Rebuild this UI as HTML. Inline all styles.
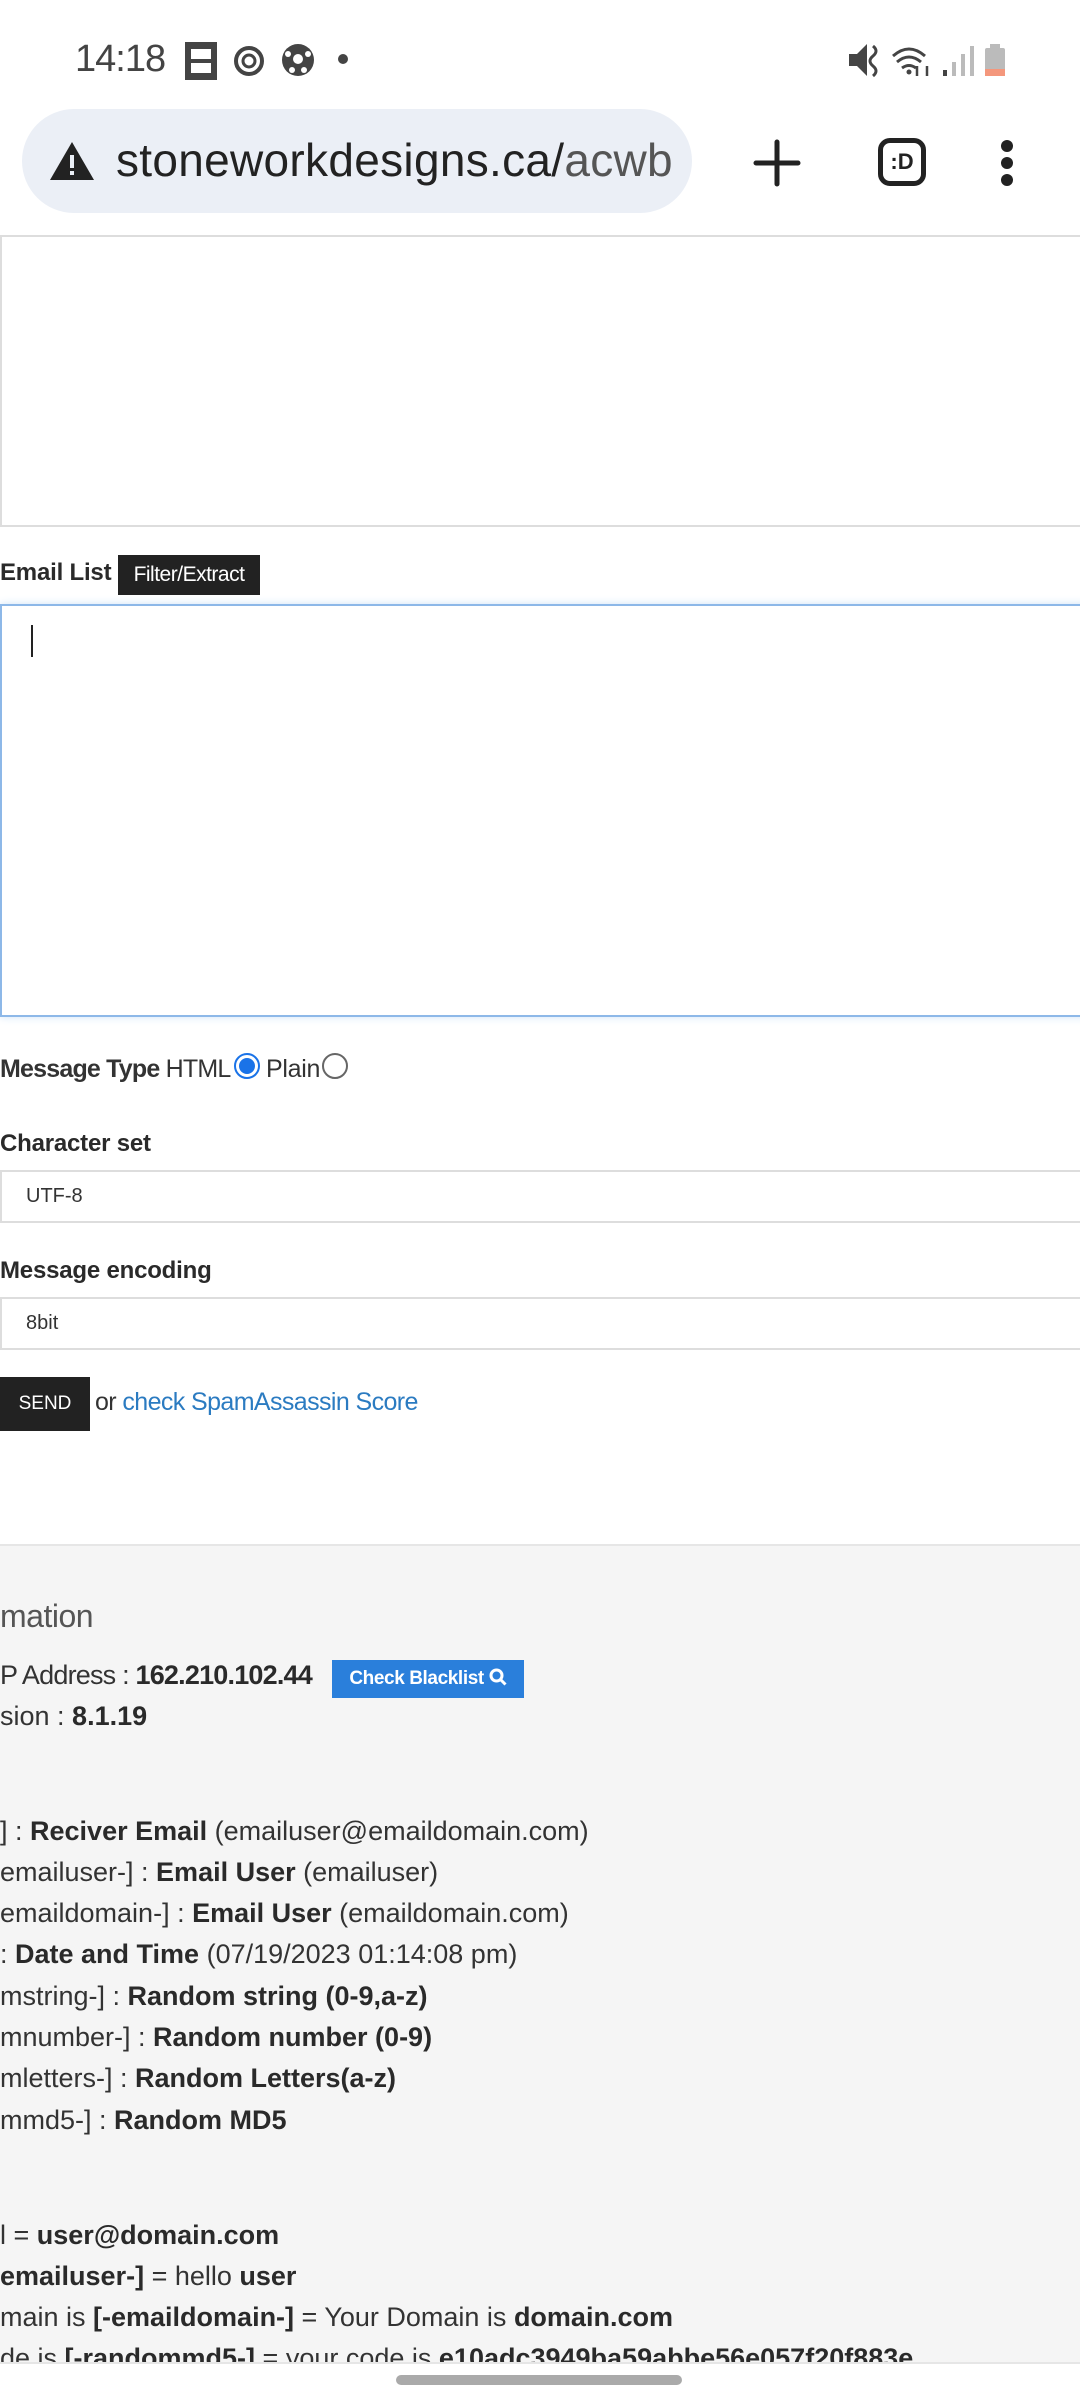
<!DOCTYPE html>
<html><head><meta charset="utf-8"><style>
*{margin:0;padding:0;box-sizing:border-box}
body{width:1080px;height:2400px;position:relative;overflow:hidden;background:#fff;font-family:"Liberation Sans",sans-serif;color:#222}
.a{position:absolute;white-space:nowrap}
.t{font-size:27px;letter-spacing:0px;color:#333}
.t b{color:#2a2a2a}
.lab{font-size:24px;font-weight:bold;letter-spacing:-0.2px;color:#2a2a2a}
</style></head><body>
<!-- status bar -->
<div class="a" style="left:75px;top:38px;font-size:38px;color:#444;letter-spacing:-1px">14:18</div>
<svg class="a" style="left:183px;top:40px" width="40" height="42"><rect x="2" y="2" width="32" height="38" fill="#444"/><rect x="8" y="9" width="20" height="10" fill="#fff"/><rect x="8" y="23" width="20" height="10" fill="#fff"/><rect x="8" y="19" width="20" height="4" fill="#444"/></svg>
<svg class="a" style="left:232px;top:44px" width="34" height="34"><circle cx="17" cy="17" r="13" fill="none" stroke="#444" stroke-width="4"/><circle cx="17" cy="17" r="6" fill="none" stroke="#444" stroke-width="3"/></svg>
<svg class="a" style="left:280px;top:42px" width="36" height="36"><circle cx="18" cy="18" r="16" fill="#444"/><circle cx="18" cy="17" r="5" fill="#fff"/><circle cx="8" cy="12" r="3" fill="#fff"/><circle cx="28" cy="12" r="3" fill="#fff"/><circle cx="12" cy="28" r="3" fill="#fff"/><circle cx="24" cy="28" r="3" fill="#fff"/></svg>
<div class="a" style="left:338px;top:54px;width:10px;height:10px;border-radius:5px;background:#444"></div>
<svg class="a" style="left:845px;top:42px" width="170" height="36"><path d="M4 12h8l10-10v32l-10-10h-8z" fill="#444"/><path d="M28 4q6 5 0 10t0 10t0 10" fill="none" stroke="#444" stroke-width="3"/><path d="M48 14q16-14 32 0M52 20q12-10 24 0M57 26q7-5 14 0" fill="none" stroke="#444" stroke-width="3"/><circle cx="64" cy="30" r="2.5" fill="#444"/><path d="M72 24v10M82 34v-10" stroke="#444" stroke-width="2.5"/><rect x="98" y="28" width="4" height="6" fill="#444"/><rect x="107" y="20" width="4" height="14" fill="#bbb"/><rect x="116" y="12" width="4" height="22" fill="#bbb"/><rect x="125" y="4" width="4" height="30" fill="#bbb"/><rect x="140" y="6" width="20" height="28" rx="2" fill="#bbb"/><rect x="145" y="2" width="10" height="5" fill="#bbb"/><rect x="140" y="27" width="20" height="7" fill="#f4977c"/></svg>
<!-- url bar -->
<div class="a" style="left:22px;top:109px;width:670px;height:104px;border-radius:52px;background:#ebeff6"></div>
<svg class="a" style="left:48px;top:140px" width="48" height="42"><path d="M24 2L46 40H2z" fill="#222"/><rect x="22" y="15" width="4" height="13" fill="#ebeff6"/><rect x="22" y="31" width="4" height="4" fill="#ebeff6"/></svg>
<div class="a" style="left:116px;top:133px;width:556px;overflow:hidden;font-size:46px;color:#222;letter-spacing:0.3px">stonework<span>designs.ca/</span><span style="color:#555">acwb</span></div>
<svg class="a" style="left:752px;top:138px" width="50" height="50"><path d="M25 4v42M4 25h42" stroke="#222" stroke-width="5" stroke-linecap="round"/></svg>
<div class="a" style="left:878px;top:138px;width:48px;height:48px;border:5px solid #222;border-radius:12px;font-size:22px;font-weight:bold;text-align:center;line-height:38px">:D</div>
<svg class="a" style="left:995px;top:138px" width="24" height="50"><circle cx="12" cy="8" r="6" fill="#222"/><circle cx="12" cy="25" r="6" fill="#222"/><circle cx="12" cy="42" r="6" fill="#222"/></svg>
<!-- top textarea -->
<div class="a" style="left:0;top:235px;width:1090px;height:292px;border:2px solid #ddd"></div>
<!-- email list -->
<div class="a lab" style="left:0;top:559px">Email List</div>
<div class="a" style="left:118px;top:555px;width:142px;height:40px;background:#222;color:#fff;font-size:21px;line-height:40px;text-align:center;letter-spacing:-0.5px">Filter/Extract</div>
<div class="a" style="left:0;top:604px;width:1090px;height:413px;border:2px solid #8db8e8;box-shadow:0 0 8px #cfe3f7"></div>
<div class="a" style="left:31px;top:625px;width:2px;height:32px;background:#222"></div>
<!-- message type -->
<div class="a" style="left:0;top:1055px;font-size:25px;color:#333;letter-spacing:-0.8px"><b>Message Type</b> HTML</div>
<div class="a" style="left:234px;top:1053px;width:26px;height:26px;border-radius:13px;border:2px solid #1a73e8;background:#fff"><div style="margin:3px;width:16px;height:16px;border-radius:8px;background:#1a73e8"></div></div>
<div class="a" style="left:266px;top:1055px;font-size:25px;color:#333;letter-spacing:-0.3px">Plain</div>
<div class="a" style="left:322px;top:1053px;width:26px;height:26px;border-radius:13px;border:2px solid #666"></div>
<div class="a lab" style="left:0;top:1130px">Character set</div>
<div class="a" style="left:0;top:1170px;width:1090px;height:53px;border:2px solid #ddd;font-size:20px;line-height:49px;padding-left:24px;color:#333">UTF-8</div>
<div class="a lab" style="left:0;top:1257px">Message encoding</div>
<div class="a" style="left:0;top:1297px;width:1090px;height:53px;border:2px solid #ddd;font-size:20px;line-height:49px;padding-left:24px;color:#333">8bit</div>
<div class="a" style="left:0;top:1377px;width:90px;height:54px;background:#222;color:#fff;font-size:19px;line-height:54px;text-align:center">SEND</div>
<div class="a" style="left:95px;top:1388px;font-size:25px;color:#333;letter-spacing:-0.6px">or <span style="color:#2b7bc1">check SpamAssassin Score</span></div>
<!-- grey section -->
<div class="a" style="left:0;top:1544px;width:1080px;height:820px;background:#f5f5f5;border-top:2px solid #e6e6e6"></div>
<div class="a" style="left:0;top:1598px;font-size:32px;color:#555;letter-spacing:-0.5px">mation</div>
<div class="a t" style="left:0;top:1660px;letter-spacing:-0.8px">P Address : <b>162.210.102.44</b></div>
<div class="a" style="left:332px;top:1660px;width:192px;height:38px;background:#2a7fdb;color:#fff;font-size:19px;font-weight:bold;line-height:38px;text-align:center;letter-spacing:-0.4px">Check Blacklist <svg width="18" height="18" style="vertical-align:-2px"><circle cx="7.5" cy="7.5" r="5.5" fill="none" stroke="#fff" stroke-width="3"/><path d="M11.5 11.5L16.5 16.5" stroke="#fff" stroke-width="3"/></svg></div>
<div class="a t" style="left:0;top:1701px">sion : <b>8.1.19</b></div>
<div class="a t" style="left:0;top:1816px">] : <b>Reciver Email</b> (emailuser@emaildomain.com)</div>
<div class="a t" style="left:0;top:1857px">emailuser-] : <b>Email User</b> (emailuser)</div>
<div class="a t" style="left:0;top:1898px">emaildomain-] : <b>Email User</b> (emaildomain.com)</div>
<div class="a t" style="left:0;top:1939px">: <b>Date and Time</b> (07/19/2023 01:14:08 pm)</div>
<div class="a t" style="left:0;top:1981px">mstring-] : <b>Random string (0-9,a-z)</b></div>
<div class="a t" style="left:0;top:2022px">mnumber-] : <b>Random number (0-9)</b></div>
<div class="a t" style="left:0;top:2063px">mletters-] : <b>Random Letters(a-z)</b></div>
<div class="a t" style="left:0;top:2105px">mmd5-] : <b>Random MD5</b></div>
<div class="a t" style="left:0;top:2220px">l = <b>user@domain.com</b></div>
<div class="a t" style="left:0;top:2261px"><b>emailuser-]</b> = hello <b>user</b></div>
<div class="a t" style="left:0;top:2302px">main is <b>[-emaildomain-]</b> = Your Domain is <b>domain.com</b></div>
<div class="a t" style="left:0;top:2343px">de is <b>[-randommd5-]</b> = your code is <b>e10adc3949ba59abbe56e057f20f883e</b></div>
<!-- nav bar -->
<div class="a" style="left:0;top:2362px;width:1080px;height:38px;background:#fff;border-top:2px solid #e6e6e6"></div>
<div class="a" style="left:396px;top:2375px;width:286px;height:10px;border-radius:5px;background:#aaa"></div>
</body></html>
